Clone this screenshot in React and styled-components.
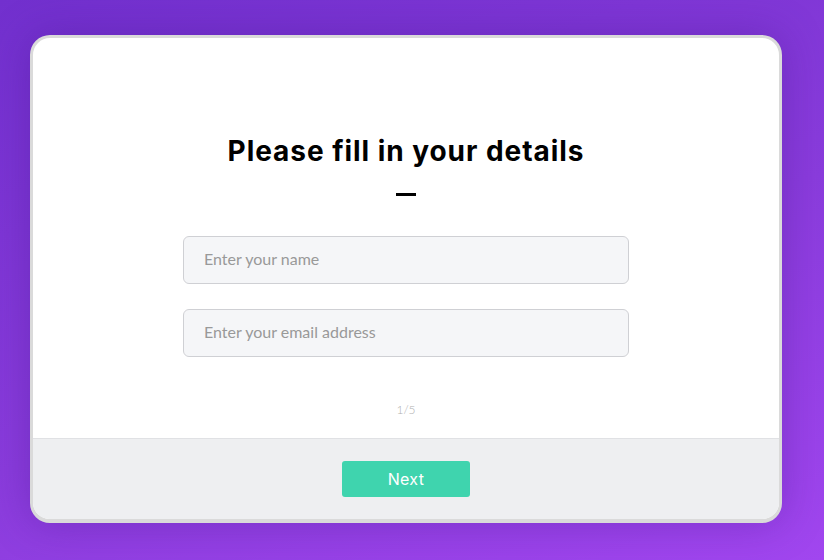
import styled, { createGlobalStyle } from "styled-components";

const GlobalStyle = createGlobalStyle`
  html, body {
    margin: 0;
    padding: 0;
  }
  body {
    font-family: "Inter", "Noto Sans", sans-serif;
  }
  * {
    box-sizing: border-box;
  }
`;

const Page = styled.div`
  width: 824px;
  height: 560px;
  padding: 35px 42px 37px 30px;
  background: linear-gradient(160deg, #7230ce 0%, #8a3cdc 55%, #a146ef 100%);
  overflow: hidden;
`;

const Card = styled.div`
  width: 752px;
  height: 488px;
  display: flex;
  flex-direction: column;
  border: 3px solid #dadada;
  border-bottom-width: 4px;
  border-radius: 20px;
  overflow: hidden;
  background: #fff;
  box-shadow: 0 0 40px rgba(70, 20, 140, 0.35);
`;

const Body = styled.div`
  flex: 1;
  display: flex;
  flex-direction: column;
  align-items: center;
  padding-top: 96px;
`;

const Title = styled.h1`
  margin: 0;
  font-family: "Inter", sans-serif;
  font-weight: 700;
  font-size: 28px;
  line-height: 34px;
  color: #000;
  letter-spacing: 0.95px;
`;

const Dash = styled.div`
  width: 20px;
  height: 3px;
  margin-top: 25px;
  background: #000;
`;

const Fields = styled.div`
  margin-top: 40px;
  display: flex;
  flex-direction: column;
  gap: 25px;
`;

const Input = styled.input`
  width: 446px;
  height: 48px;
  padding: 0 20px 3px;
  border: 1px solid #cfd0d4;
  border-radius: 6px;
  background: #f5f6f8;
  font-family: "Lato", sans-serif;
  font-size: 16px;
  color: #333;
  outline: none;
  &::placeholder {
    color: #999;
  }
`;

const Step = styled.div`
  margin-top: 45px;
  font-family: "Lato", sans-serif;
  font-weight: 300;
  font-size: 12px;
  line-height: 16px;
  color: #b0b0b0;
`;

const Footer = styled.div`
  height: 81px;
  flex-shrink: 0;
  display: flex;
  align-items: center;
  justify-content: center;
  background: #eeeff1;
  border-top: 1px solid #e0e1e4;
`;

const NextButton = styled.button`
  width: 128px;
  height: 36px;
  border: none;
  border-radius: 3px;
  background: #3fd4ae;
  color: #fff;
  font-family: "Inter", sans-serif;
  font-size: 16px;
  font-weight: 400;
  letter-spacing: 0.3px;
  cursor: pointer;
`;

export default function App() {
  return (
    <>
      <GlobalStyle />
      <Page>
        <Card>
          <Body>
            <Title>Please fill in your details</Title>
            <Dash />
            <Fields>
              <Input placeholder="Enter your name" />
              <Input placeholder="Enter your email address" />
            </Fields>
            <Step>1/5</Step>
          </Body>
          <Footer>
            <NextButton>Next</NextButton>
          </Footer>
        </Card>
      </Page>
    </>
  );
}
